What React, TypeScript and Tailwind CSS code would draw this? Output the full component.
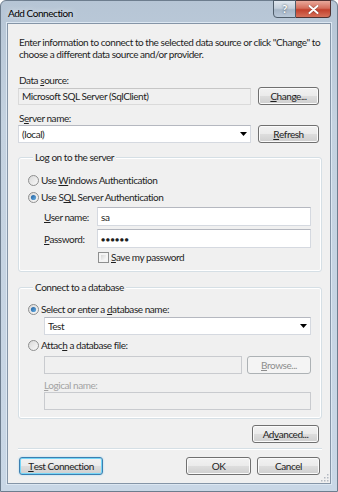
import React from 'react';

// mnemonic underline
function Mn({ children }: { children: React.ReactNode }) {
  return <span className="underline decoration-[1px] underline-offset-[1px]">{children}</span>;
}

function WinButton({
  children,
  className = '',
  disabled = false,
  focused = false,
}: {
  children: React.ReactNode;
  className?: string;
  disabled?: boolean;
  focused?: boolean;
}) {
  let look =
    'border-[#707070] bg-[linear-gradient(180deg,#f2f2f2_0%,#ebebeb_48%,#dddddd_52%,#cfcfcf_100%)] shadow-[inset_0_0_0_1px_#fbfbfb] text-[#1e1e1e]';
  if (disabled) look = 'border-[#adb2b5] bg-[#f4f4f4] text-[#8d8d8d]';
  if (focused)
    look =
      'border-[#3c7fb1] bg-[linear-gradient(180deg,#f2f2f2_0%,#ebebeb_48%,#dddddd_52%,#cfcfcf_100%)] shadow-[inset_0_0_0_1px_#76d6f7,0_0_2px_#9cd4f0] text-[#1e1e1e]';
  return (
    <button
      className={`flex h-[18px] shrink-0 items-center justify-center rounded-[3px] border ${look} ${className}`}
    >
      {children}
    </button>
  );
}

function TextBox({ children, className = '' }: { children?: React.ReactNode; className?: string }) {
  return (
    <div
      className={`flex items-center border border-[#d5d9e0] border-t-[#b5b8c0] bg-white pl-[3px] ${className}`}
    >
      {children}
    </div>
  );
}

function Arrow() {
  return (
    <svg width="7" height="4" viewBox="0 0 7 4" className="mr-[3px] ml-auto">
      <path d="M0 0H7L3.5 4Z" fill="#000" />
    </svg>
  );
}

function Radio({ checked = false }: { checked?: boolean }) {
  return (
    <svg width="11" height="11" viewBox="0 0 11 11" className="shrink-0">
      <defs>
        <linearGradient id="rfill" x1="0" y1="0" x2="1" y2="1">
          <stop offset="0" stopColor="#d7d7d7" />
          <stop offset="1" stopColor="#fbfbfb" />
        </linearGradient>
        <linearGradient id="rdot" x1="0" y1="0" x2="1" y2="1">
          <stop offset="0" stopColor="#1b5a9b" />
          <stop offset="1" stopColor="#6db3e6" />
        </linearGradient>
      </defs>
      <circle cx="5.5" cy="5.5" r="5" fill="url(#rfill)" stroke="#8e8f8f" />
      {checked && <circle cx="5.5" cy="5.5" r="2.6" fill="url(#rdot)" />}
    </svg>
  );
}

function Check() {
  return (
    <div className="h-[11px] w-[11px] shrink-0 border border-[#8e8f8f] bg-[#f4f4f4] p-[2px]">
      <div className="h-full w-full bg-[linear-gradient(135deg,#d6d6d6,#fafafa)]" />
    </div>
  );
}

function Group({ title, children }: { title: string; children: React.ReactNode }) {
  return (
    <fieldset className="min-w-0 rounded-[3px] border border-[#d5dfe5] pr-[10px] pb-[8px] pl-[9px] shadow-[inset_0_0_0_1px_#ffffff]">
      <legend className="ml-[5px] bg-[#f0f0f0] px-[2px]">{title}</legend>
      {children}
    </fieldset>
  );
}

function CaptionButtons() {
  return (
    <div className="-mt-[1px] flex">
      <div className="flex h-[18px] w-[23px] items-center justify-center rounded-bl-[4px] border border-[#4f5d6b] bg-[linear-gradient(180deg,#dfe6ee_0%,#c3cfdb_45%,#a6b6c7_55%,#b9c8d8_100%)] text-[11px] font-bold text-white [text-shadow:0_0_2px_#2c3a48]">
        ?
      </div>
      <div className="flex h-[18px] w-[35px] items-center justify-center rounded-br-[4px] border border-l-0 border-[#4f3131] bg-[linear-gradient(180deg,#e9a99b_0%,#d46e5c_45%,#c2402c_55%,#d5705a_100%)]">
        <svg width="11" height="9" viewBox="0 0 11 9">
          <path d="M1.5 1L9.5 8M9.5 1L1.5 8" stroke="#3a1a16" strokeWidth="3" strokeLinecap="round" opacity="0.35" />
          <path d="M1.5 1L9.5 8M9.5 1L1.5 8" stroke="#ffffff" strokeWidth="2" strokeLinecap="round" />
        </svg>
      </div>
    </div>
  );
}

export default function App() {
  return (
    <div className="h-[492px] w-[338px] font-[family-name:Lato,sans-serif] text-[10px] leading-[12px] tracking-[-0.45px] text-[#1e1e1e]">
      <div className="flex h-full flex-col rounded-t-[6px] border border-[#6d7d8e] bg-[linear-gradient(180deg,#b6c5d5_0%,#c4d2e0_25%,#c9d7e6_100%)] px-[6px] pb-[7px]">
        {/* title bar */}
        <div className="flex h-[22px] shrink-0 items-start justify-between">
          <div className="pt-[6px] pl-[1px] text-black [text-shadow:0_0_6px_#ffffff]">
            Add Connection
          </div>
          <CaptionButtons />
        </div>

        {/* client area */}
        <div className="relative flex flex-1 flex-col border border-[#8595a7] bg-[#f0f0f0] pr-[8px] pl-[10px] shadow-[0_0_0_1px_#dce7f2]">
          <p className="mt-[12px] pl-[1px] whitespace-nowrap">
            Enter information to connect to the selected data source or click "Change" to
            <br />
            choose a different data source and/or provider.
          </p>

          <div className="mt-[14px] pl-[1px]">
            Data <Mn>s</Mn>ource:
          </div>
          <div className="mt-[1px] flex items-center">
            <div className="flex h-[17px] flex-1 items-center border border-[#dadada] border-t-[#c6c6c6] bg-[#f0f0f0] pl-[3px]">
              Microsoft SQL Server (SqlClient)
            </div>
            <WinButton className="mr-[3px] ml-[7px] w-[61px]">
              <Mn>C</Mn>hange...
            </WinButton>
          </div>

          <div className="mt-[7px] pl-[1px]">
            S<Mn>e</Mn>rver name:
          </div>
          <div className="mt-[1px] flex items-center">
            <TextBox className="h-[18px] flex-1">
              (local)
              <Arrow />
            </TextBox>
            <WinButton className="mr-[3px] ml-[7px] w-[61px]">
              <Mn>R</Mn>efresh
            </WinButton>
          </div>

          <div className="mt-[8px]">
            <Group title="Log on to the server">
              <div className="mt-[11px] flex items-center gap-[2px]">
                <Radio />
                <span>
                  Use <Mn>W</Mn>indows Authentication
                </span>
              </div>
              <div className="mt-[5px] flex items-center gap-[2px]">
                <Radio checked />
                <span>
                  Use S<Mn>Q</Mn>L Server Authentication
                </span>
              </div>
              <div className="mt-[4px] flex items-center pl-[16px]">
                <span className="w-[53px]">
                  <Mn>U</Mn>ser name:
                </span>
                <TextBox className="h-[19px] flex-1">sa</TextBox>
              </div>
              <div className="mt-[3px] flex items-center pl-[16px]">
                <span className="w-[53px]">
                  <Mn>P</Mn>assword:
                </span>
                <TextBox className="h-[19px] flex-1">
                  <span className="text-[7px] tracking-[0.5px]">●●●●●●</span>
                </TextBox>
              </div>
              <div className="mt-[3px] flex items-center gap-[2px] pl-[70px]">
                <Check />
                <span>
                  <Mn>S</Mn>ave my password
                </span>
              </div>
            </Group>
          </div>

          <div className="mt-[9px]">
            <Group title="Connect to a database">
              <div className="mt-[10px] flex items-center gap-[2px]">
                <Radio checked />
                <span>
                  Select or enter a <Mn>d</Mn>atabase name:
                </span>
              </div>
              <div className="mt-[2px] pl-[16px]">
                <TextBox className="h-[18px]">
                  Test
                  <Arrow />
                </TextBox>
              </div>
              <div className="mt-[4px] flex items-center gap-[2px]">
                <Radio />
                <span>
                  Attac<Mn>h</Mn> a database file:
                </span>
              </div>
              <div className="mt-[5px] flex items-center pl-[16px]">
                <div className="h-[18px] flex-1 border border-[#c9cbcf] bg-[#f0f0f0]" />
                <WinButton disabled className="ml-[5px] w-[64px]">
                  <Mn>B</Mn>rowse...
                </WinButton>
              </div>
              <div className="mt-[5px] pl-[16px] text-[#a3a3a3]">
                <Mn>L</Mn>ogical name:
              </div>
              <div className="mt-[1px] pl-[16px]">
                <div className="h-[18px] border border-[#c9cbcf] bg-[#f0f0f0]" />
              </div>
            </Group>
          </div>

          <div className="mt-[6px] flex justify-end">
            <WinButton className="mr-[3px] w-[67px]">
              Ad<Mn>v</Mn>anced...
            </WinButton>
          </div>

          <div className="mt-[5px] h-[2px] border-t border-[#d5dfe5] bg-white" />

          <div className="mt-[7px] flex items-center">
            <WinButton focused className="ml-[1px] w-[84px]">
              <Mn>T</Mn>est Connection
            </WinButton>
            <WinButton className="ml-auto w-[65px]">OK</WinButton>
            <WinButton className="mr-[2px] ml-[6px] w-[63px]">Cancel</WinButton>
          </div>

          {/* size grip */}
          <svg width="9" height="9" viewBox="0 0 9 9" className="absolute right-[1px] bottom-[1px]">
            {[
              [7, 1],
              [7, 4],
              [4, 4],
              [7, 7],
              [4, 7],
              [1, 7],
            ].map(([x, y]) => (
              <rect key={`${x}-${y}`} x={x} y={y} width="1.5" height="1.5" fill="#b3b9c1" />
            ))}
          </svg>
        </div>
      </div>
    </div>
  );
}
